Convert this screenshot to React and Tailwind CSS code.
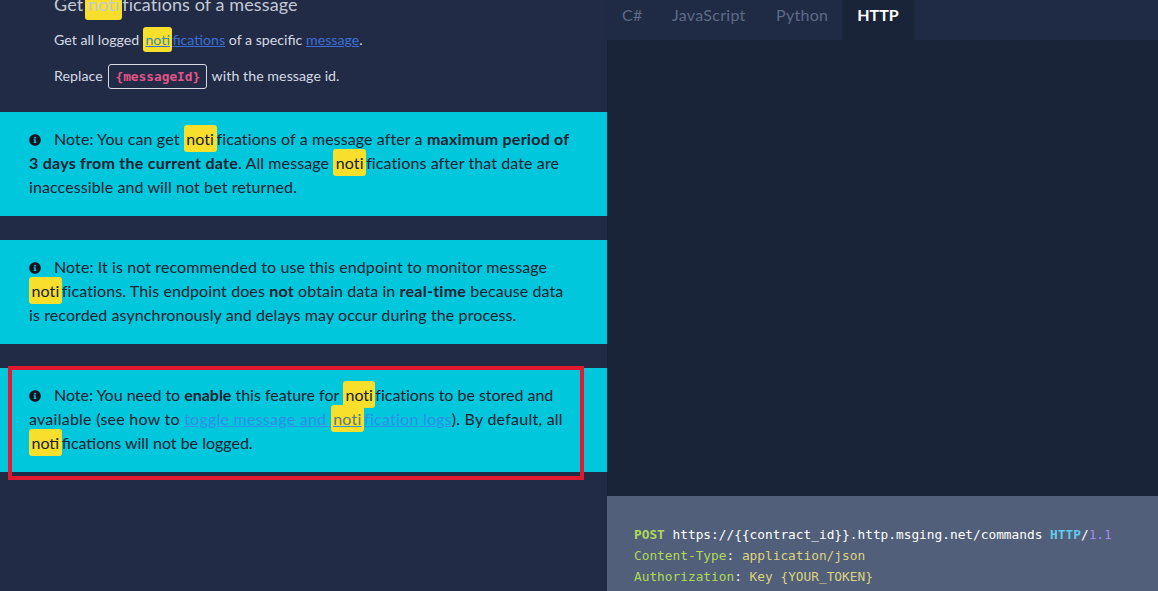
const Hl = ({ children, className = "" }) => (
  <span className={`rounded-[3px] bg-[#f7df2c] px-[2.5px] py-[4px] ${className}`}>{children}</span>
);

const InfoIcon = () => (
  <svg viewBox="0 0 512 512" className="mr-[13px] inline-block h-3 w-3 align-[-1px]" fill="#0f1420">
    <path d="M256 8C119 8 8 119 8 256s111 248 248 248 248-111 248-248S393 8 256 8zm0 110a42 42 0 1 1 0 84 42 42 0 0 1 0-84zm56 254c0 7-5 12-12 12h-88c-7 0-12-5-12-12v-24c0-7 5-12 12-12h12v-64h-12c-7 0-12-5-12-12v-24c0-7 5-12 12-12h64c7 0 12 5 12 12v100h12c7 0 12 5 12 12v24z" />
  </svg>
);

const B = ({ children }) => <b className="tracking-[0.25px]">{children}</b>;

const Note = ({ children }) => (
  <div className="bg-[#00c7dc] pb-[17px] pl-[29px] pr-[36px] pt-[15px] text-[16px] leading-[24px] tracking-[0.1px] text-[#182131]">
    <InfoIcon />
    {children}
  </div>
);

export default function App() {
  return (
    <div className="relative flex h-[591px] w-[1158px] overflow-hidden bg-[#212b45] font-['Lato','Noto_Sans',sans-serif]">
      <div className="flex w-[607px] shrink-0 flex-col">
        <div className="-mt-[9px] h-[121px] pl-[54px]">
          <h2 className="text-[18px] font-normal leading-[26px] tracking-[0.1px] text-[#c3c9d6]">
            Get <Hl className="-ml-[3px] px-[3px] py-[5px]">noti</Hl>fications of a message
          </h2>
          <p className="mt-[11px] text-[14.2px] leading-[24px] text-[#d5dae4]">
            Get all logged{" "}
            <a className="text-[#3d6fd6] underline">
              <Hl className="text-[#3c8cae]">noti</Hl>fications
            </a>{" "}
            of a specific <a className="text-[#3d6fd6] underline">message</a>.
          </p>
          <p className="mt-[12px] text-[14.2px] leading-[24px] tracking-[0.05px] text-[#d5dae4]">
            Replace{" "}
            <code className="ml-[2px] mr-[1px] rounded-[3px] border border-[#d5dae4] px-[6px] py-[4px] font-['DejaVu_Sans_Mono',monospace] text-[12.8px] font-bold tracking-normal text-[#e0568a]">
              {"{messageId}"}
            </code>{" "}
            with the message id.
          </p>
        </div>
        <div className="flex flex-col gap-[24px]">
          <Note>
            Note: You can get <Hl>noti</Hl>fications of a message after a <B>maximum period of 3 days from the current date</B>. All message <Hl>noti</Hl>fications after that date are inaccessible and will not bet returned.
          </Note>
          <Note>
            Note: It is not recommended to use this endpoint to monitor message <Hl>noti</Hl>fications. This endpoint does <B>not</B> obtain data in <B>real-time</B> because data is recorded asynchronously and delays may occur during the process.
          </Note>
          <Note>
            <span className="tracking-[-0.02px]">Note: You need to <b>enable</b> this feature for <Hl>noti</Hl>fications to be stored and</span> <span className="tracking-[0.25px]">available (see how to{" "}
            <a className="text-[#2c8fe8] underline">
              toggle message and <Hl className="text-[#5c7a80]">noti</Hl>fication logs
            </a>
            ). By default, all</span> <span className="tracking-normal"><Hl>noti</Hl>fications will not be logged.</span>
          </Note>
        </div>
      </div>
      <div className="flex flex-1 flex-col bg-[#1a2438]">
        <div className="flex h-[40px] shrink-0 bg-[#1f2a44] text-[16px] leading-[30px] tracking-[0.3px] text-[#5d6b87]">
          <span className="w-[52px] pl-[15px]">C#</span>
          <span className="w-[104px] pl-[13px]">JavaScript</span>
          <span className="w-[79px] pl-[13px]">Python</span>
          <span className="w-[72px] bg-[#1a2438] text-center font-bold tracking-normal text-white">HTTP</span>
        </div>
        <div className="flex-1" />
        <pre className="h-[95px] shrink-0 bg-[#515f7a] pl-[27px] pt-[28px] font-['DejaVu_Sans_Mono',monospace] text-[12.8px] leading-[21px] text-white">
          <span className="font-bold text-[#b0d95a]">POST</span> https://{"{{"}contract_id{"}}"}.http.msging.net/commands <span className="font-bold text-[#66c8ec]">HTTP</span>/<span className="text-[#a78be8]">1.1</span>
          {"\n"}
          <span className="text-[#b0d95a]">Content-Type</span>: <span className="text-[#dcd47e]">application/json</span>
          {"\n"}
          <span className="text-[#b0d95a]">Authorization</span>: <span className="text-[#dcd47e]">Key {"{YOUR_TOKEN}"}</span>
        </pre>
      </div>
      <div className="absolute left-[8px] top-[366px] h-[114px] w-[576px] border-[4px] border-[#e3192f]" />
    </div>
  );
}
